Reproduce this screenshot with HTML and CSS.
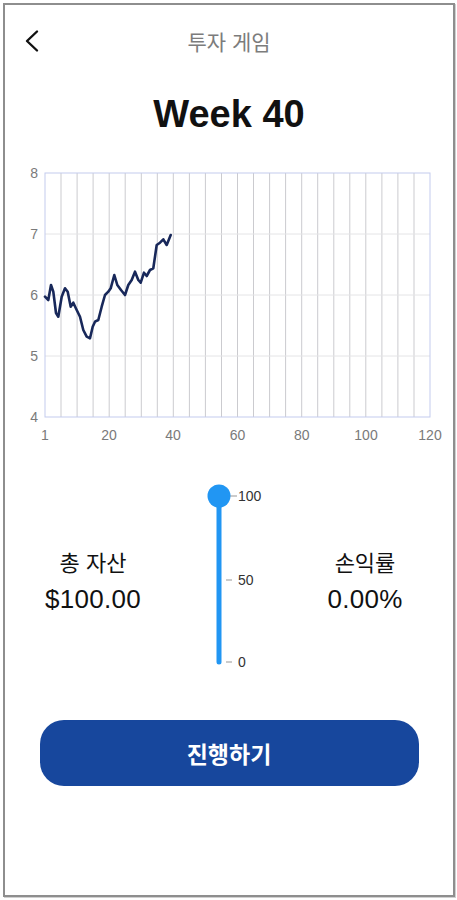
FILE: index.html
```html
<!DOCTYPE html>
<html lang="ko">
<head>
    <meta charset="UTF-8">
    <meta name="viewport" content="width=device-width, initial-scale=1.0">
    <title>투자 게임</title>
    <link rel="stylesheet" href="styles.css">
</head>
<body>

<div class="phone">
    <div class="header">
        <svg class="back" width="24" height="24" viewBox="0 0 24 24">
            <path d="M15 2.5 L5 12 L15 21.5" fill="none" stroke="#111" stroke-width="2.4" stroke-linecap="round" stroke-linejoin="round"/>
        </svg>
        <span class="header-title">투자 게임</span>
    </div>

    <h1 class="week">Week 40</h1>

    <svg class="chart" viewBox="5 0 448 290" width="448" height="290">
        <!-- vertical grid -->
        <path class="grid-v" d="M61 13V257M77.1 13V257M93.1 13V257M109.2 13V257M125.2 13V257M141.3 13V257M157.3 13V257M173.3 13V257M189.4 13V257M205.4 13V257M221.5 13V257M237.5 13V257M253.5 13V257M269.6 13V257M285.6 13V257M301.7 13V257M317.7 13V257M333.8 13V257M349.8 13V257M365.8 13V257M381.9 13V257M397.9 13V257M414 13V257"/>
        <!-- horizontal grid -->
        <path class="grid-h" d="M45 74H430M45 135H430M45 196H430"/>
        <rect class="plot-border" x="45" y="13" width="385" height="244"/>

        <g class="y-labels">
            <text x="38" y="18">8</text>
            <text x="38" y="79">7</text>
            <text x="38" y="140">6</text>
            <text x="38" y="201">5</text>
            <text x="38" y="262">4</text>
        </g>
        <g class="x-labels">
            <text x="45" y="280">1</text>
            <text x="109" y="280">20</text>
            <text x="173" y="280">40</text>
            <text x="237.5" y="280">60</text>
            <text x="301.7" y="280">80</text>
            <text x="366" y="280">100</text>
            <text x="430" y="280">120</text>
        </g>

        <polyline class="price" points="45,136.7 48.3,140 51,125 53.3,131.7 56,153 58.3,156.7 61.7,136.7 65,128.3 67.7,131.7 70.7,146.7 73.3,142.7 76.7,150 80,156.7 83.3,170 86.7,176.7 90,178.3 92.7,166.7 95,161.7 98.3,160 101.7,146.7 105,135 108.3,131.7 110.7,128.3 114.3,115 117.3,125 121,130 125,135 128.3,125 131.7,120 135,111.7 138.3,120 140.7,122.7 144,112.7 146.7,116 150,110 153.3,108.3 156.7,85 160,82.7 163.3,79.3 166.7,85 170.7,75"/>
    </svg>

    <div class="stats">
        <div class="stat">
            <span class="stat-label">총 자산</span>
            <span class="stat-value">$100.00</span>
        </div>

        <svg class="slider" width="96" height="190" viewBox="0 0 96 190">
            <path class="tick" d="M45 16H56M45 100H51M45 182H51"/>
            <line class="track" x1="38" y1="16" x2="38" y2="182"/>
            <circle class="thumb" cx="38" cy="16" r="11.5"/>
            <text x="57" y="21">100</text>
            <text x="57" y="105">50</text>
            <text x="57" y="187">0</text>
        </svg>

        <div class="stat">
            <span class="stat-label">손익률</span>
            <span class="stat-value">0.00%</span>
        </div>
    </div>

    <button class="next" type="button">진행하기</button>
</div>

</body>
</html>
```

FILE: styles.css
```css
body {
    margin: 0;
    background: #fff;
    font-family: "Liberation Sans", "Noto Sans CJK KR", sans-serif;
}
.phone {
    box-sizing: border-box;
    height: 894px;
    margin: 3px 2px 3px 3px;
    border: 2px solid #8e8e8e;
    box-shadow: 1px 1px 0 #d0d0d0;
    background: white;
}
.header {
    display: flex;
    align-items: center;
    height: 40px;
    margin-top: 16px;
    padding-left: 17px;
    position: relative;
}
.back {
    display: block;
}
.header-title {
    position: absolute;
    left: 0;
    right: 0;
    text-align: center;
    font-size: 21px;
    color: #7c7c7c;
    pointer-events: none;
}
.week {
    margin: 30px 0 0;
    height: 46px;
    line-height: 46px;
    text-align: center;
    font-size: 38px;
    font-weight: bold;
    color: #111;
}
.chart {
    display: block;
    margin-top: 23px;
}
.grid-v {
    stroke: #cbcbcf;
    stroke-width: 1;
    fill: none;
}
.grid-h {
    stroke: #e4e4e6;
    stroke-width: 1;
    fill: none;
}
.plot-border {
    fill: none;
    stroke: #c3cbee;
    stroke-width: 1;
}
.y-labels text {
    text-anchor: end;
    font-size: 14px;
    fill: #7a7a7a;
}
.x-labels text {
    text-anchor: middle;
    font-size: 14px;
    fill: #7a7a7a;
}
.price {
    fill: none;
    stroke: #18285a;
    stroke-width: 2.6;
    stroke-linejoin: round;
    stroke-linecap: round;
}
.stats {
    display: grid;
    grid-template-columns: 176px 96px 1fr;
    height: 190px;
    margin-top: 30px;
}
.stat {
    display: flex;
    flex-direction: column;
    align-items: center;
    justify-content: center;
    padding-top: 18px;
    color: #111;
}
.stat-label {
    font-size: 22px;
    line-height: 30px;
}
.stat-value {
    font-size: 26px;
    line-height: 40px;
    letter-spacing: 0.3px;
}
.slider text {
    font-size: 14px;
    fill: #333;
}
.tick {
    stroke: #bbb;
    stroke-width: 1.5;
}
.track {
    stroke: #2196f3;
    stroke-width: 5;
    stroke-linecap: round;
}
.thumb {
    fill: #2196f3;
}
.next {
    display: block;
    width: 379px;
    height: 66px;
    margin: 50px auto 0;
    border: none;
    border-radius: 24px;
    background-color: #17479d;
    color: white;
    font-family: inherit;
    font-size: 23px;
    font-weight: bold;
    cursor: pointer;
}
```
